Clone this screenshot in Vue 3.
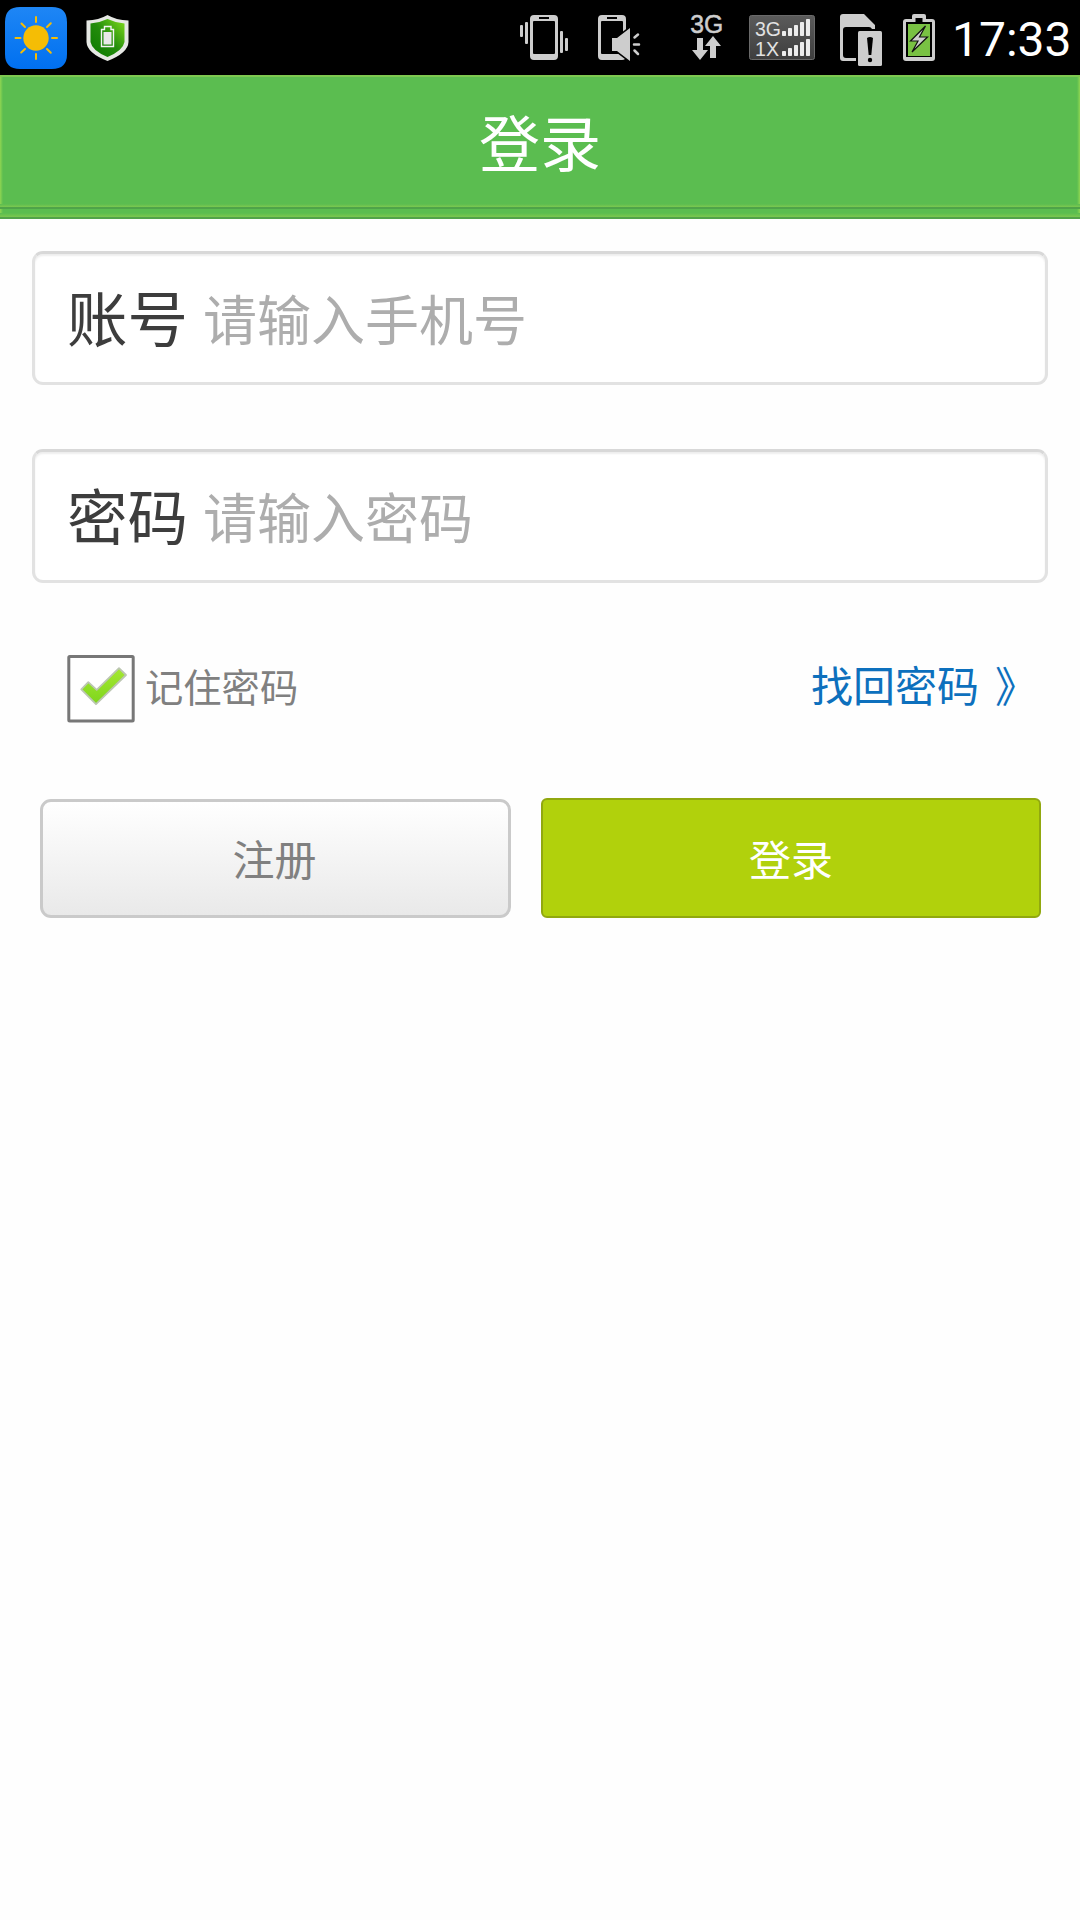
<script setup>
import { ref } from 'vue'

const fields = [
  { label: '账号', hint: '请输入手机号', type: 'tel' },
  { label: '密码', hint: '请输入密码', type: 'password' },
]
const remember = ref(true)
const barsX = [0, 6, 12, 18, 24]
</script>

<template>
  <div class="screen">
    <div class="status">
      <svg class="ico" width="80" height="75" viewBox="0 0 80 75">
        <defs>
          <linearGradient id="sky" x1="0" y1="0" x2="0" y2="1">
            <stop offset="0" stop-color="#1e86f5" />
            <stop offset="1" stop-color="#0070f0" />
          </linearGradient>
        </defs>
        <path d="M20 7H52Q67 7 67 22V54Q67 69 52 69H20Q5 69 5 54V22Q5 7 20 7Z" fill="url(#sky)" />
        <circle cx="36" cy="38" r="12.7" fill="#f5bd05" />
        <path d="M36 17v5M36 54v5M15.500 38h5M52 38h5M21.500 23.500l3.500 3.500M47 49l3.800 3.800M50.800 23.200l-3.800 3.800M25 49l-3.800 3.500" stroke="#f5bd05" stroke-width="2" stroke-linecap="round" />
      </svg>
      <svg class="ico" width="60" height="75" viewBox="80 0 60 75">
        <defs>
          <linearGradient id="leaf" x1="0" y1="1" x2="1" y2="0">
            <stop offset="0" stop-color="#0c7800" />
            <stop offset=".5" stop-color="#238c0c" />
            <stop offset="1" stop-color="#80dc1c" />
          </linearGradient>
        </defs>
        <path d="M107.500 15Q116 20 128.500 20.500V42Q128 53 107.500 61Q87 53 86.500 42V20.500Q99 20 107.500 15Z" fill="#e6e8e4" />
        <path d="M107.500 19Q116 23 124.500 23.500V42Q123 50.500 107.500 57Q92 50.500 90.500 42V23.500Q99 23 107.500 19Z" fill="url(#leaf)" />
        <path d="M104.500 26.500H111V29.500H113.500V46.500H101.500V29.500H104.500Z" fill="none" stroke="#f4f4f4" stroke-width="1.400" />
        <rect x="103.500" y="32" width="8" height="12.500" fill="#e9e9e9" />
      </svg>

      <svg class="ico modes" width="85" height="75" viewBox="510 0 85 75">
        <g fill="#cdcdcd">
          <path fill-rule="evenodd" d="M534 15H554Q558 15 558 19V56Q558 60 554 60H534Q530 60 530 56V19Q530 15 534 15ZM533 22V53Q533 54 534 54H554Q555 54 555 53V22Q555 21 554 21H534Q533 21 533 22ZM539 17V19H549V17Z" />
          <rect x="520" y="25" width="3" height="12" rx="1" />
          <rect x="525" y="22" width="3" height="22" rx="1" />
          <rect x="560" y="31" width="3" height="22" rx="1" />
          <rect x="565" y="38" width="3" height="13" rx="1" />
        </g>
      </svg>
      <svg class="ico" width="85" height="75" viewBox="595 0 85 75">
        <path fill="#cdcdcd" fill-rule="evenodd" d="M602 15H622Q626 15 626 19V56Q626 60 622 60H602Q598 60 598 56V19Q598 15 602 15ZM601 22V53Q601 54 602 54H622Q623 54 623 53V22Q623 21 622 21H602Q601 21 601 22ZM607 17V19H617V17Z" />
        <path d="M612 38H617L630 28V61L617 51H612Z" fill="#cdcdcd" stroke="#000" stroke-width="3" paint-order="stroke" />
        <path d="M634.500 37.500L638 34.500M634 44.500H639M634.500 50.500L638 54" stroke="#cdcdcd" stroke-width="2.500" stroke-linecap="round" />
      </svg>
      <svg class="ico" width="60" height="75" viewBox="680 0 60 75">
        <text x="690.300" y="32.500" font-size="26" textLength="33" lengthAdjust="spacingAndGlyphs" fill="#cdcdcd" stroke="#cdcdcd" stroke-width=".5">3G</text>
        <path d="M697 38H703V50H708L700 60L692 50H697ZM713 36L721 46H716V58H710V46H705Z" fill="#cdcdcd" />
      </svg>
      <svg class="ico" width="90" height="75" viewBox="740 0 90 75">
        <defs>
          <linearGradient id="slate" x1="0" y1="0" x2="0" y2="1">
            <stop offset="0" stop-color="#5b5b5b" />
            <stop offset="1" stop-color="#3e3e3e" />
          </linearGradient>
        </defs>
        <rect x="749.500" y="15.500" width="65" height="44" rx="2" fill="url(#slate)" stroke="#6a6a6a" />
        <text x="755" y="36" font-size="20" textLength="26" lengthAdjust="spacingAndGlyphs" fill="#e2e2e2">3G</text>
        <text x="755" y="56" font-size="20" textLength="24" lengthAdjust="spacingAndGlyphs" fill="#e2e2e2">1X</text>
        <g fill="#ececec">
          <template v-for="(x, i) in barsX" :key="x">
            <rect :x="782 + x" :y="31 - i * 3" width="4" :height="5 + i * 3" rx=".7" />
            <rect :x="782 + x" :y="51 - i * 3" width="4" :height="5 + i * 3" rx=".7" />
          </template>
        </g>
      </svg>
      <svg class="ico" width="70" height="75" viewBox="830 0 70 75">
        <path fill="#cdcdcd" fill-rule="evenodd" d="M843 14H864L875 25V29H858V61H843Q840 61 840 58V17Q840 14 843 14ZM846 27Q843 27 843 30V55Q843 58 846 58H856V29H872Q871 27 869 27Z" />
        <path d="M856 29H882V66H856Z" fill="#000" />
        <rect x="858" y="31" width="24" height="35" rx="1.500" fill="#cdcdcd" />
        <path d="M867 38Q870 36 873 38L871.300 55H868.700Z" fill="#000" />
        <circle cx="870" cy="60" r="2.200" fill="#000" />
      </svg>
      <svg class="ico" width="50" height="75" viewBox="900 0 50 75">
        <path fill="#cdcdcd" d="M914 14H924Q926 14 926 16V19H932Q935 19 935 22V58Q935 61 932 61H906Q903 61 903 58V22Q903 19 906 19H912V16Q912 14 914 14Z" />
        <path d="M915.500 18H922.500V22H932V57H906V22H915.500Z" fill="#000" />
        <rect x="908" y="24" width="22" height="32" fill="#79c143" />
        <path d="M925.500 26L910.500 41H918L912 52L927.500 37H919.500Z" fill="#cfcfcf" stroke="#111" stroke-width="1.200" />
      </svg>
      <span class="clock">17:33</span>
    </div>

    <header class="title"><h1>登录</h1></header>

    <form class="form" @submit.prevent>
      <label v-for="f in fields" :key="f.label" class="field">
        <span class="label">{{ f.label }}</span>
        <input class="input" :type="f.type" :placeholder="f.hint" />
      </label>

      <div class="options">
        <label class="remember">
          <input v-model="remember" class="native" type="checkbox" />
          <svg width="68" height="68" viewBox="0 0 68 68">
            <defs>
              <linearGradient id="tick" x1="0" y1="0" x2="0" y2="1">
                <stop offset="0" stop-color="#a5e832" />
                <stop offset="1" stop-color="#7ed51c" />
              </linearGradient>
            </defs>
            <rect x="1.800" y="1.500" width="64.400" height="64.400" rx="1" fill="#fff" stroke="#777" stroke-width="3" />
            <path v-if="remember" d="M14.300 34.300L21.300 27.200L29.700 34.800L52 13.200L59 20L29 49.200Z" fill="url(#tick)" stroke="#bcc6b2" stroke-width="1.800" stroke-linejoin="round" />
          </svg>
          <span class="remember-text">记住密码</span>
        </label>
        <a class="recover"><span>找回密码</span><span class="arrow">》</span></a>
      </div>

      <div class="actions">
        <button class="register" type="button">注册</button>
        <button class="login" type="submit">登录</button>
      </div>
    </form>
  </div>
</template>

<style>
body {
  background: #fefefe;
}
</style>

<style scoped>
.screen {
  box-sizing: border-box;
  width: 1080px;
  height: 1920px;
  overflow: hidden;
  background: #fefefe;
  font-family: "Noto Sans CJK SC", sans-serif;
}
.status {
  display: flex;
  height: 75px;
  background: #000;
  font-family: "Liberation Sans", sans-serif;
}
.ico {
  display: block;
  flex: none;
}
.modes {
  margin-left: 370px;
}
.clock {
  margin-left: 2px;
  color: #fff;
  font: 400 48px/79px Roboto, sans-serif;
  white-space: nowrap;
}
.title {
  box-sizing: border-box;
  height: 144px;
  background:
    linear-gradient(#7ec850, #7ec850) 0 0 / 100% 2px no-repeat,
    linear-gradient(#52a34a, #52a34a) 0 100% / 100% 2px no-repeat,
    linear-gradient(#5bbd50, #7cc84f) 0 138px / 100% 4px no-repeat,
    linear-gradient(#4fa349, #4fa349) 0 132px / 100% 2px no-repeat,
    linear-gradient(#5bbd50, #7cc84f) 0 129px / 100% 3px no-repeat,
    linear-gradient(90deg, #8fd552, #5bbd50) 0 0 / 3px 100% no-repeat,
    linear-gradient(270deg, #8fd552, #5bbd50) 100% 0 / 3px 100% no-repeat,
    #5bbd50;
}
h1 {
  margin: 0;
  color: #fff;
  font-size: 61px;
  font-weight: 400;
  line-height: 132px;
  text-align: center;
}
.form {
  display: flex;
  flex-direction: column;
  padding: 32px 32px 0;
}
.field {
  box-sizing: border-box;
  display: flex;
  align-items: center;
  height: 134px;
  margin-bottom: 64px;
  padding: 0 32px 0 32px;
  border: 3px solid #e2e2e2;
  border-top-color: #d8d8d8;
  border-radius: 11px;
  background: #fff;
  box-shadow: inset 0 2px 2px #eee;
}
.label {
  padding-bottom: 4px;
  color: #3d3d3d;
  font-size: 60.500px;
  line-height: 80px;
}
.input {
  flex: 1;
  min-width: 0;
  height: 80px;
  margin-left: 15px;
  padding: 0;
  border: 0;
  outline: 0;
  background: transparent;
  color: #3d3d3d;
  font: 54px/80px "Noto Sans CJK SC", sans-serif;
}
.input::placeholder {
  color: #adadad;
  opacity: 1;
}
.options {
  display: flex;
  justify-content: space-between;
  align-items: center;
  height: 68px;
  margin-top: 8px;
  padding: 0 0 0 35px;
}
.remember {
  display: flex;
  align-items: center;
  gap: 10px;
  color: #808080;
  font-size: 38.300px;
}
.remember-text {
  padding-bottom: 8px;
}
.native {
  display: none;
}
.recover {
  display: flex;
  width: 237px;
  padding-bottom: 11px;
  color: #0d70bd;
  font-size: 42px;
}
.arrow {
  margin-left: 16px;
}
.actions {
  display: flex;
  gap: 30px;
  margin-top: 75px;
  padding: 0 7px 0 8px;
}
button {
  box-sizing: border-box;
  height: 120px;
  padding: 0;
  font: 42px/60px "Noto Sans CJK SC", sans-serif;
}
.register {
  width: 471px;
  height: 119px;
  margin-top: 1px;
  padding: 0 2px 2px 0;
  border: 3px solid #cacaca;
  border-radius: 11px;
  background: linear-gradient(#fff, #e9e9e9);
  color: #808080;
}
.login {
  width: 500px;
  border: 2px solid #91a80f;
  border-radius: 6px;
  background: #b1d10c;
  color: #fff;
}
</style>
